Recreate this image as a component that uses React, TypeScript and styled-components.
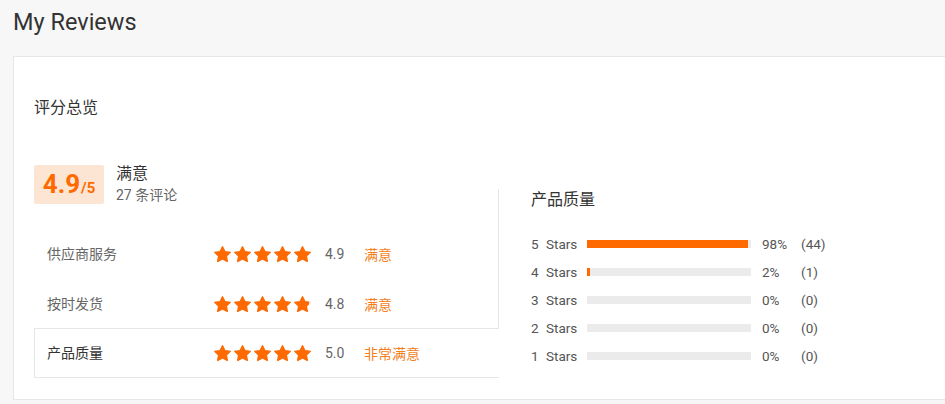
import React from "react";
import styled, { createGlobalStyle } from "styled-components";

const Global = createGlobalStyle`
  html, body { margin: 0; padding: 0; background: #f7f7f7; overflow: hidden; }
  body { font-family: Roboto, "Noto Sans CJK SC", sans-serif; color: #333; }
  * { box-sizing: border-box; }
`;

const Page = styled.div`
  width: 945px;
  height: 404px;
  overflow: hidden;
  background: #f7f7f7;
`;

const Title = styled.h1`
  margin: 0;
  padding: 8px 0 0 13px;
  height: 56px;
  font-size: 23.5px;
  font-weight: 400;
  line-height: 28px;
  color: #333;
`;

const Card = styled.section`
  margin-left: 13px;
  width: 960px;
  height: 344px;
  background: #fff;
  border: 1px solid #e6e6e6;
  padding: 40px 0 0 20px;
`;

const SectionTitle = styled.div`
  font-size: 16px;
  line-height: 22px;
  color: #333;
`;

const Body = styled.div`
  display: flex;
  align-items: flex-end;
  margin-top: 45px;
`;

const LeftCol = styled.div`
  width: 464px;
  position: relative;
  z-index: 1;
`;

const Summary = styled.div`
  display: flex;
  align-items: center;
  gap: 12px;
  height: 40px;
`;

const ScoreBox = styled.div`
  width: 70px;
  height: 39px;
  background: #fde5d4;
  border-radius: 2px;
  display: flex;
  align-items: baseline;
  justify-content: center;
  padding-top: 3px;
  color: #ff6a00;
  font-weight: 700;
`;

const ScoreBig = styled.span`
  font-size: 26px;
  line-height: 32px;
`;

const ScoreSmall = styled.span`
  font-size: 15px;
  margin-left: 1px;
`;

const SummaryText = styled.div`
  display: flex;
  flex-direction: column;
  margin-top: -1px;
`;

const SummaryMain = styled.span`
  font-size: 16px;
  line-height: 22px;
  color: #333;
`;

const SummarySub = styled.span`
  font-size: 14px;
  line-height: 20px;
  color: #666;
`;

const Tabs = styled.div`
  margin-top: 25px;
`;

const Tab = styled.div<{ $active?: boolean }>`
  display: flex;
  align-items: center;
  height: 50px;
  padding-left: 12px;
  background: #fff;
  border: 1px solid ${(p) => (p.$active ? "#e6e6e6" : "transparent")};
  border-right: none;
  margin-right: ${(p) => (p.$active ? "-1px" : "0")};
  margin-top: ${(p) => (p.$active ? "-1px" : "0")};
  color: ${(p) => (p.$active ? "#333" : "#666")};
`;

const TabLabel = styled.span`
  width: 166px;
  font-size: 14px;
  line-height: 20px;
`;

const Stars = styled.span`
  display: flex;
  gap: 1px;
  width: 112px;
`;

const StarWrap = styled.span`
  position: relative;
  width: 19px;
  height: 19px;
  display: inline-block;
`;

const StarClip = styled.span`
  position: absolute;
  left: 0;
  top: 0;
  height: 19px;
  overflow: hidden;
`;

const TabScore = styled.span`
  width: 39px;
  font-size: 14px;
  color: #666;
`;

const TabMood = styled.span`
  font-size: 14px;
  color: #f47f1c;
`;

const RightPanel = styled.div`
  flex: 1;
  height: 189px;
  border-left: 1px solid #e6e6e6;
  padding-left: 32px;
`;

const PanelTitle = styled.div`
  font-size: 16px;
  line-height: 22px;
  color: #333;
`;

const Dist = styled.div`
  margin-top: 19px;
  display: flex;
  flex-direction: column;
`;

const DistRow = styled.div`
  display: flex;
  align-items: center;
  height: 28px;
  font-size: 13.5px;
  color: #555;
`;

const DistNum = styled.span`
  width: 15px;
`;

const DistLabel = styled.span`
  width: 41px;
`;

const Track = styled.div`
  width: 164px;
  height: 8px;
  background: #ebebeb;
  margin-right: 11px;
`;

const Fill = styled.div`
  height: 8px;
  background: #ff6a00;
`;

const DistPct = styled.span`
  width: 39px;
`;

const DistCount = styled.span``;

const STAR_POINTS =
  "12,2.2 15,8.4 21.8,9.3 16.9,14 18.1,20.8 12,17.6 5.9,20.8 7.1,14 2.2,9.3 9,8.4";

const StarSvg: React.FC<{ color: string }> = ({ color }) => (
  <svg width="19" height="19" viewBox="0 0 24 24">
    <polygon
      points={STAR_POINTS}
      fill={color}
      stroke={color}
      strokeWidth="1.6"
      strokeLinejoin="round"
    />
  </svg>
);

const StarRating: React.FC<{ value: number }> = ({ value }) => (
  <Stars>
    {[0, 1, 2, 3, 4].map((i) => {
      const frac = Math.max(0, Math.min(1, value - i));
      return (
        <StarWrap key={i}>
          <StarSvg color="#dcdcdc" />
          <StarClip style={{ width: `${frac * 19}px` }}>
            <StarSvg color="#ff6a00" />
          </StarClip>
        </StarWrap>
      );
    })}
  </Stars>
);

const tabs = [
  { label: "供应商服务", value: 4.9, stars: 5, mood: "满意" },
  { label: "按时发货", value: 4.8, stars: 4.82, mood: "满意" },
  { label: "产品质量", value: 5.0, stars: 5, mood: "非常满意", active: true },
];

const dist = [
  { n: 5, pct: 98, count: 44 },
  { n: 4, pct: 2, count: 1 },
  { n: 3, pct: 0, count: 0 },
  { n: 2, pct: 0, count: 0 },
  { n: 1, pct: 0, count: 0 },
];

export default function App() {
  return (
    <Page>
      <Global />
      <Title>My Reviews</Title>
      <Card>
        <SectionTitle>评分总览</SectionTitle>
        <Body>
          <LeftCol>
            <Summary>
              <ScoreBox>
                <ScoreBig>4.9</ScoreBig>
                <ScoreSmall>/5</ScoreSmall>
              </ScoreBox>
              <SummaryText>
                <SummaryMain>满意</SummaryMain>
                <SummarySub>27 条评论</SummarySub>
              </SummaryText>
            </Summary>
            <Tabs>
              {tabs.map((t) => (
                <Tab key={t.label} $active={t.active}>
                  <TabLabel>{t.label}</TabLabel>
                  <StarRating value={t.stars} />
                  <TabScore>{t.value.toFixed(1)}</TabScore>
                  <TabMood>{t.mood}</TabMood>
                </Tab>
              ))}
            </Tabs>
          </LeftCol>
          <RightPanel>
            <PanelTitle>产品质量</PanelTitle>
            <Dist>
              {dist.map((d) => (
                <DistRow key={d.n}>
                  <DistNum>{d.n}</DistNum>
                  <DistLabel>Stars</DistLabel>
                  <Track>
                    <Fill style={{ width: `${d.pct}%` }} />
                  </Track>
                  <DistPct>{d.pct}%</DistPct>
                  <DistCount>({d.count})</DistCount>
                </DistRow>
              ))}
            </Dist>
          </RightPanel>
        </Body>
      </Card>
    </Page>
  );
}
